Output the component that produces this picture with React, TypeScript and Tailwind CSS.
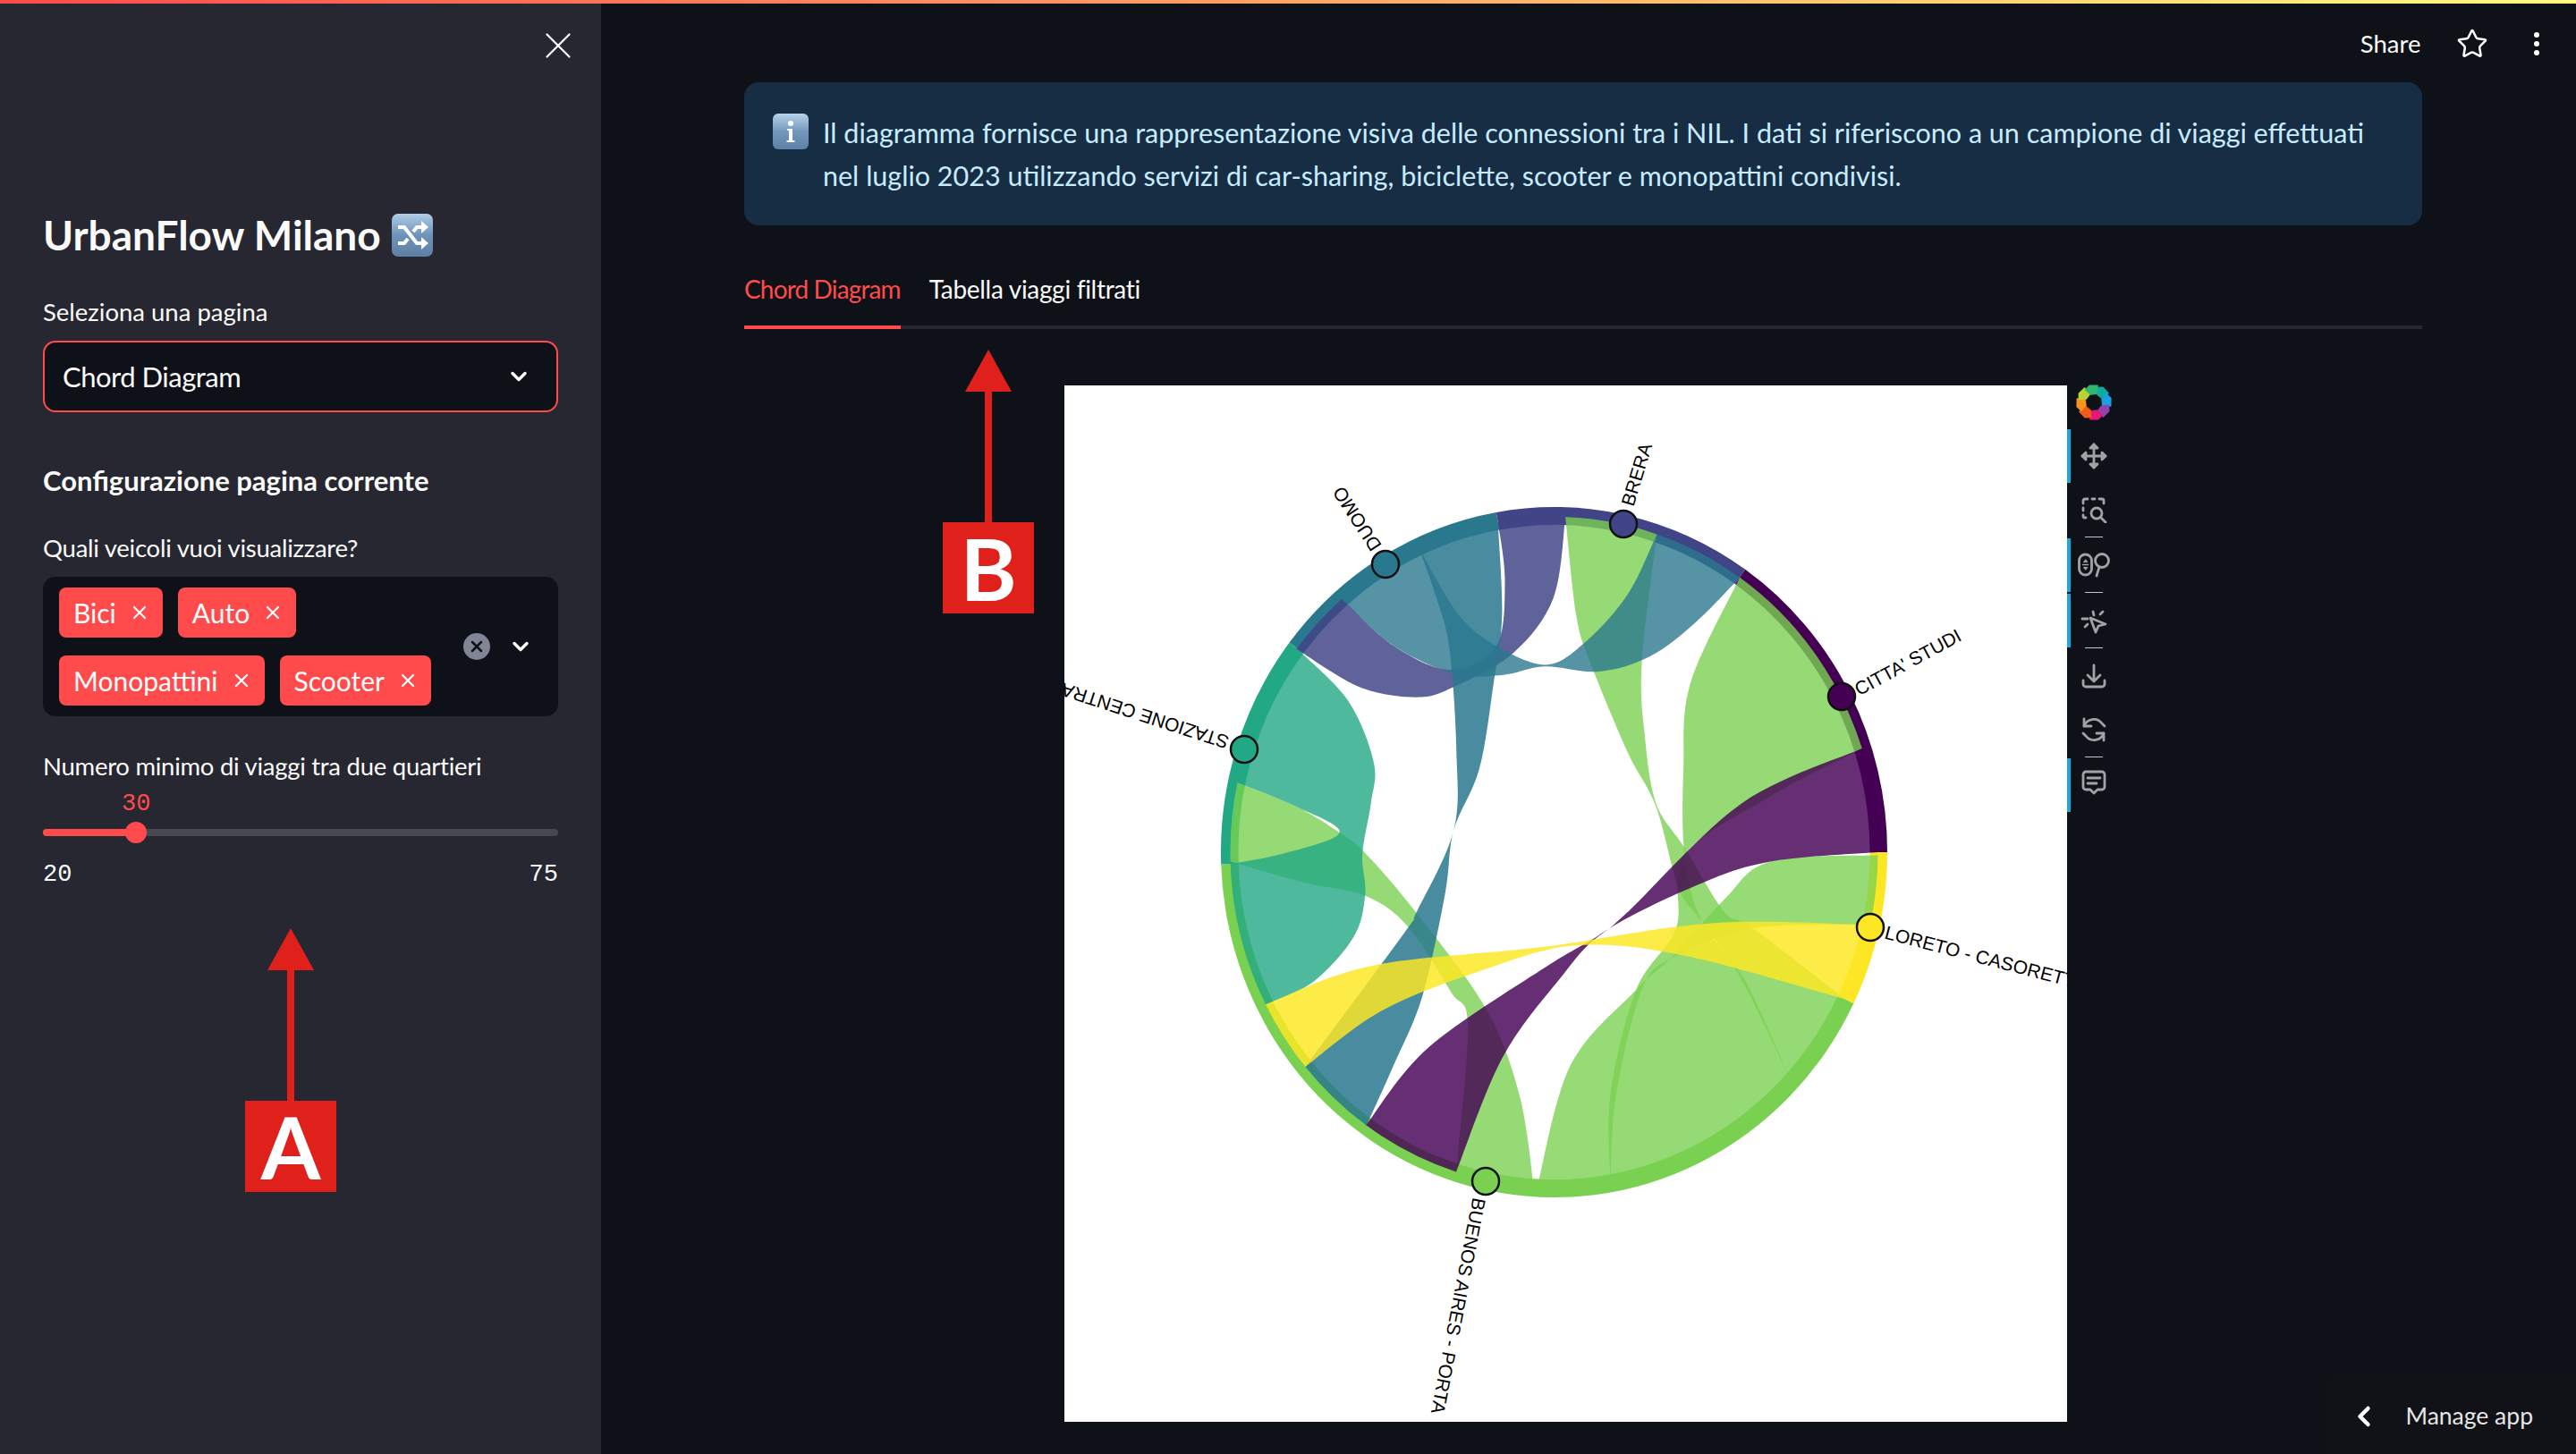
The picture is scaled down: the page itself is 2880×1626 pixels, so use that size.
import React from "react";
import { ChevronDown, ChevronLeft, Star, X } from "lucide-react";

// chord geometry was read off the zoomed crops, so points are in crop units (u, v)
const CX = 1737.5;
const CY = 953;
const toXY = ([u, v]: number[]) => [1150 + u / 1.568, 420 + v / 2.613];
const onRing = (deg: number, rx = 362, ry = 375) => {
  const t = (deg * Math.PI) / 180;
  return [CX + rx * Math.cos(t), CY + ry * Math.sin(t)];
};
const f = (n: number) => n.toFixed(1);

function spline(pts: number[][]) {
  let d = "";
  for (let i = 0; i < pts.length - 1; i++) {
    const p0 = pts[Math.max(i - 1, 0)];
    const p1 = pts[i];
    const p2 = pts[i + 1];
    const p3 = pts[Math.min(i + 2, pts.length - 1)];
    d += ` C${f(p1[0] + (p2[0] - p0[0]) / 6)} ${f(p1[1] + (p2[1] - p0[1]) / 6)} ${f(p2[0] - (p3[0] - p1[0]) / 6)} ${f(p2[1] - (p3[1] - p1[1]) / 6)} ${f(p2[0])} ${f(p2[1])}`;
  }
  return d;
}

type Chord = { color: string; op?: number; a: number[]; b: number[]; s1: number[][]; s2: number[][] };

function chordPath({ a, b, s1, s2 }: Chord) {
  const a1 = onRing(a[0]);
  const a2 = onRing(a[1]);
  const b1 = onRing(b[0]);
  const b2 = onRing(b[1]);
  const side1 = [a1, ...s1.map(toXY), b1];
  const side2 = [b2, ...s2.map(toXY).reverse(), a2];
  return (
    `M${f(a1[0])} ${f(a1[1])}` +
    spline(side1) +
    ` A362 375 0 0 ${b[1] > b[0] ? 1 : 0} ${f(b2[0])} ${f(b2[1])}` +
    spline(side2) +
    ` A362 375 0 0 ${a[0] > a[1] ? 1 : 0} ${f(a1[0])} ${f(a1[1])}Z`
  );
}

const GREEN = "#7ad151";
const TEAL = "#2a788e";
const INDIGO = "#414487";
const SEA = "#22a884";
const PURPLE = "#440154";
const YELLOW = "#fde725";

const chords: Chord[] = [
  // Citta - Buenos Aires
  { color: GREEN, op: 0.8, a: [305, 342], b: [43, 80], s1: [[1160, 900], [1148, 1150], [1150, 1400], [1180, 1595], [1255, 1765]], s2: [[1300, 1230], [1150, 1400], [1135, 1615], [1065, 1795], [1020, 2100]] },
  // Loreto - Buenos Aires
  { color: GREEN, op: 0.78, a: [0.5, 12.5], b: [93, 80], s1: [[1300, 1420], [1220, 1530], [1130, 1695], [1065, 1795], [950, 2015]], s2: [[1270, 1615], [1130, 1700], [1075, 1795], [1030, 2100]] },
  // Brera - Buenos Aires
  { color: GREEN, op: 0.8, a: [272, 288.5], b: [43, 26], s1: [[960, 700], [985, 840], [1050, 1100], [1100, 1260], [1140, 1500], [1180, 1595], [1250, 1765]], s2: [[1075, 840], [1080, 1050], [1100, 1250], [1150, 1380], [1220, 1568], [1270, 1615]] },
  // Stazione - Buenos Aires (green)
  { color: GREEN, op: 0.8, a: [192, 178.4], b: [93.6, 107.6], s1: [[470, 1260], [545, 1335], [590, 1395], [675, 1560], [800, 1845], [860, 2100]], s2: [[480, 1480], [590, 1520], [665, 1610], [740, 1800], [770, 1900]] },
  // Stazione - Buenos Aires (sea green)
  { color: SEA, op: 0.8, a: [217.4, 192], b: [153, 178], s1: [[560, 950], [605, 1130], [600, 1250], [585, 1400], [590, 1515], [570, 1640], [500, 1770]], s2: [[470, 1260], [545, 1335], [450, 1395]] },
  // Duomo - Brera
  { color: INDIGO, op: 0.84, a: [217.3, 229.1], b: [272, 260], s1: [[580, 910], [680, 940], [745, 910], [850, 810], [920, 650]], s2: [[640, 790], [740, 860], [820, 790], [835, 600]] },
  { color: TEAL, op: 0.8, a: [229, 245.3], b: [305, 288.5], s1: [[640, 790], [745, 870], [830, 875], [905, 850], [1000, 865], [1090, 820], [1170, 720]], s2: [[750, 690], [810, 780], [905, 845], [975, 780], [1050, 640]] },
  // Duomo - Buenos Aires
  { color: TEAL, op: 0.85, a: [245.3, 260], b: [140.2, 125.4], s1: [[715, 650], [738, 800], [750, 1100], [745, 1330], [680, 1568], [660, 1625]], s2: [[830, 700], [815, 900], [790, 1150], [745, 1330], [730, 1515], [690, 1815], [640, 2015]] },
  // Citta - Buenos Aires (purple)
  { color: PURPLE, op: 0.82, a: [342, 360], b: [125.5, 107.6], s1: [[1250, 1250], [1050, 1568], [1000, 1635], [900, 1735], [700, 1965]], s2: [[1300, 1420], [1170, 1490], [1010, 1625], [930, 1765], [830, 1995]] },
  // Loreto - Buenos Aires (yellow)
  { color: YELLOW, op: 0.84, a: [153, 140.2], b: [12.5, 26], s1: [[600, 1725], [900, 1670], [1200, 1600]], s2: [[620, 1855], [800, 1735], [960, 1665], [1150, 1695]] },
];

const segments = [
  { from: 217.4, to: 260, color: TEAL },
  { from: 260, to: 305, color: INDIGO },
  { from: 305, to: 360, color: PURPLE },
  { from: 0, to: 26, color: YELLOW },
  { from: 26, to: 178, color: GREEN },
  { from: 178, to: 217.4, color: SEA },
];

function segmentPath(from: number, to: number) {
  const o1 = onRing(from, 372.5, 386);
  const o2 = onRing(to, 372.5, 386);
  const i1 = onRing(from, 353, 366);
  const i2 = onRing(to, 353, 366);
  return `M${f(o1[0])} ${f(o1[1])} A372.5 386 0 0 1 ${f(o2[0])} ${f(o2[1])} L${f(i2[0])} ${f(i2[1])} A353 366 0 0 0 ${f(i1[0])} ${f(i1[1])}Z`;
}

const dots = [
  { x: 1815, y: 586, color: INDIGO },
  { x: 1549, y: 631, color: TEAL },
  { x: 1391, y: 838, color: SEA },
  { x: 2059, y: 779, color: PURPLE },
  { x: 2091, y: 1037, color: YELLOW },
  { x: 1661, y: 1321, color: GREEN },
];

const labels = [
  { text: "BRERA", x: 1819, y: 565, rot: -73 },
  { text: "DUOMO", x: 1539, y: 614, rot: -123 },
  { text: "STAZIONE CENTRALE", x: 1373, y: 831, rot: 198 },
  { text: "CITTA' STUDI", x: 2075, y: 772, rot: -28.6 },
  { text: "LORETO - CASORETTO", x: 2108, y: 1042, rot: 14.6 },
  { text: "BUENOS AIRES - PORTA", x: 1654, y: 1340, rot: 101 },
];

function ChordChart() {
  return (
    <svg viewBox="1190 431 1121 1159" className="block h-[1159px] w-[1121px] shrink-0 bg-white">
      {segments.map((s) => (
        <path key={s.from} d={segmentPath(s.from, s.to)} fill={s.color} />
      ))}
      {chords.map((c, i) => (
        <path key={i} d={chordPath(c)} fill={c.color} fillOpacity={c.op} />
      ))}
      {dots.map((d) => (
        <circle key={d.x} cx={d.x} cy={d.y} r="15" fill={d.color} stroke="#111" strokeWidth="2.5" />
      ))}
      {labels.map((l) => (
        <text
          key={l.text}
          x={l.x}
          y={l.y}
          fontFamily="Liberation Sans, sans-serif"
          fontSize="21"
          dominantBaseline="central"
          fill="#000"
          transform={`rotate(${l.rot} ${l.x} ${l.y})`}
        >
          {l.text}
        </text>
      ))}
    </svg>
  );
}

function BokehLogo() {
  const petals = ["#0fa9a0", "#18a0e0", "#8e44ad", "#e5177b", "#f05a1a", "#f7941d", "#b5d334", "#2bb673"];
  return (
    <svg viewBox="0 0 40 40" className="h-10 w-10">
      {petals.map((c, i) => (
        <path key={c} d="M20 11 L16 3 L23 0 L32 4 L27 13Z" fill={c} transform={`rotate(${i * 45 + 22} 20 20)`} />
      ))}
    </svg>
  );
}

const toolIcon = {
  fill: "none",
  stroke: "#a0a3a6",
  strokeWidth: 2.8,
  strokeLinecap: "round" as const,
  strokeLinejoin: "round" as const,
  className: "h-[30px] w-[30px]",
};

function ToolItem({ active, children }: { active?: boolean; children: React.ReactNode }) {
  return (
    <div className="relative flex h-[60px] w-[60px] items-center justify-center">
      {active && <div className="absolute bottom-0 left-0 top-0 w-1 bg-[#1aa7dd]" />}
      {children}
    </div>
  );
}

function ToolSep() {
  return (
    <div className="h-0.5">
      <div className="ml-[20px] h-px w-5 bg-[#c4c6c8]" />
    </div>
  );
}

function Toolbar() {
  return (
    <div className="flex w-[60px] shrink-0 flex-col">
      <div className="flex h-[49px] items-center justify-center pb-[11px]">
        <BokehLogo />
      </div>
      <ToolItem active>
        <svg viewBox="0 0 30 30" {...toolIcon}>
          <path d="M15 2v26M2 15h26" />
          <path d="M15 2l-4 4h8zM15 28l-4-4h8zM2 15l4-4v8zM28 15l-4-4v8z" fill="#a0a3a6" />
        </svg>
      </ToolItem>
      <ToolItem>
        <svg viewBox="0 0 30 30" {...toolIcon}>
          <path d="M3 8V5a2 2 0 0 1 2-2h3M13 3h3M21 3h3a2 2 0 0 1 2 2v3M3 13v3M3 21v1a2 2 0 0 0 2 2h1" />
          <circle cx="18" cy="19" r="6" />
          <path d="M22.5 23.5L28 29" />
        </svg>
      </ToolItem>
      <ToolSep />
      <ToolItem active>
        <svg viewBox="0 0 36 30" {...toolIcon} className="h-[30px] w-[36px]">
          <rect x="1.5" y="3" width="14" height="23" rx="7" />
          <path d="M5.5 14.5h6" strokeWidth="1.5" />
          <path d="M8.5 9l-2 2.5h4zM8.5 20l-2-2.500h4z" fill="#a0a3a6" strokeWidth="1" />
          <circle cx="27" cy="10" r="7.5" />
          <path d="M24 17l-3 10" />
        </svg>
      </ToolItem>
      <ToolSep />
      <ToolItem active>
        <svg viewBox="0 0 30 30" {...toolIcon}>
          <path d="M14 5l1 4M25 5l-3 3M2 13h6M5 22l3-3" />
          <path d="M11 12l17 7-8 2-3 7z" />
        </svg>
      </ToolItem>
      <ToolSep />
      <ToolItem>
        <svg viewBox="0 0 30 30" {...toolIcon}>
          <path d="M15 3v18M8 14l7 7 7-7" />
          <path d="M3 20v4a3 3 0 0 0 3 3h18a3 3 0 0 0 3-3v-4" />
        </svg>
      </ToolItem>
      <ToolItem>
        <svg viewBox="0 0 30 30" {...toolIcon}>
          <path d="M4 11a11.5 11.5 0 0 1 20-3l3 3M26 19a11.5 11.5 0 0 1-20 3l-3-3" />
          <path d="M4 3v8h8M26 27v-8h-8" />
        </svg>
      </ToolItem>
      <ToolSep />
      <ToolItem active>
        <svg viewBox="0 0 30 30" {...toolIcon} className="-mt-1.5 h-[30px] w-[30px]">
          <path d="M6 3h18a3 3 0 0 1 3 3v14a3 3 0 0 1-3 3h-5l-4 4-4-4H6a3 3 0 0 1-3-3V6a3 3 0 0 1 3-3z" />
          <path d="M8 10h14M8 16h10" />
        </svg>
      </ToolItem>
    </div>
  );
}

function ShuffleEmoji() {
  return (
    <svg viewBox="0 0 46 48" className="ml-3 h-12 w-[46px]">
      <defs>
        <linearGradient id="shuffle-bg" x1="0" y1="0" x2="0" y2="1">
          <stop offset="0" stopColor="#aecde8" />
          <stop offset="0.5" stopColor="#6f93b8" />
          <stop offset="1" stopColor="#5d7fa4" />
        </linearGradient>
      </defs>
      <rect width="46" height="48" rx="7" fill="url(#shuffle-bg)" />
      <path d="M7 15h7l14 18h6M7 33h7l4-5M24 20l4-5h6" fill="none" stroke="#fff" strokeWidth="4" />
      <path d="M33 8l8 7-8 7zM33 26l8 7-8 7z" fill="#fff" />
    </svg>
  );
}

function InfoEmoji() {
  return (
    <svg viewBox="0 0 40 40" className="h-10 w-10 shrink-0">
      <defs>
        <linearGradient id="info-bg" x1="0" y1="0" x2="0" y2="1">
          <stop offset="0" stopColor="#b8d3ea" />
          <stop offset="0.5" stopColor="#7397bb" />
          <stop offset="1" stopColor="#5f81a6" />
        </linearGradient>
      </defs>
      <rect width="40" height="40" rx="6" fill="url(#info-bg)" />
      <circle cx="20" cy="11" r="3" fill="#fff" />
      <path d="M16 17h6v13h2.5v2h-9v-2H18V19h-2z" fill="#fff" />
    </svg>
  );
}

function Tag({ label }: { label: string }) {
  return (
    <div className="flex h-14 items-center gap-[14px] rounded-lg bg-[#ff4b4b] pl-4 pr-[14px] text-[30px] text-white">
      <span>{label}</span>
      <X className="h-[24px] w-[24px]" strokeWidth={2.2} />
    </div>
  );
}

function Arrow({ letter }: { letter: string }) {
  return (
    <div className="flex w-[102px] flex-col items-center">
      <div className="h-0 w-0 border-x-[26px] border-b-[47px] border-x-transparent border-b-[#e0201b]" />
      <div className="h-[146px] w-2 bg-[#e0201b]" />
      <div className="flex h-[102px] w-[102px] items-center justify-center bg-[#e0201b] text-[96px] font-bold leading-none text-white">
        {letter}
      </div>
    </div>
  );
}

export default function App() {
  return (
    <div className="relative flex h-[1626px] w-[2880px] overflow-hidden bg-[#0e1117] font-[Lato,sans-serif] text-[#fafafa]">
      <div className="absolute inset-x-0 top-0 z-10 h-1 bg-[linear-gradient(90deg,#ff4b4b,#fffd80)]" />

      {/* sidebar */}
      <aside className="relative flex w-[672px] shrink-0 flex-col bg-[#262730] px-12 pt-[232px]">
        <X className="absolute left-[599px] top-[26px] h-[50px] w-[50px]" strokeWidth={1.1} />

        <div className="flex h-[62px] items-center text-[46px] font-bold leading-none">
          UrbanFlow Milano
          <ShuffleEmoji />
        </div>

        <div className="mt-[35px] flex h-10 items-center text-[27.5px]">Seleziona una pagina</div>
        <div className="mt-[12px] flex h-20 items-center justify-between rounded-[14px] border-2 border-[#ff4b4b] bg-[#0e1117] pl-5 pr-[28px] text-[31px] tracking-[-0.5px]">
          <span>Chord Diagram</span>
          <ChevronDown className="h-7 w-7" strokeWidth={3} />
        </div>

        <div className="mt-[56px] flex h-[40px] items-center text-[31px] font-bold">Configurazione pagina corrente</div>
        <div className="mt-[36px] flex h-10 items-center text-[27.5px] tracking-[-0.25px]">Quali veicoli vuoi visualizzare?</div>
        <div className="mt-[12px] flex h-[156px] items-center justify-between rounded-[14px] bg-[#0e1117] pl-[18px] pr-[28px]">
          <div className="flex w-[440px] flex-wrap gap-x-[17px] gap-y-5">
            <Tag label="Bici" />
            <Tag label="Auto" />
            <Tag label="Monopattini" />
            <Tag label="Scooter" />
          </div>
          <div className="flex items-center gap-[20px]">
            <div className="flex h-[30px] w-[30px] items-center justify-center rounded-full bg-[#808495]">
              <X className="h-5 w-5 text-[#0e1117]" strokeWidth={3} />
            </div>
            <ChevronDown className="h-7 w-7" strokeWidth={3} />
          </div>
        </div>

        <div className="mt-[36px] flex h-10 items-center text-[27.5px] tracking-[-0.27px]">Numero minimo di viaggi tra due quartieri</div>
        <div className="relative mt-[2px] h-[48px] font-['Liberation_Mono',monospace] text-[27px]">
          <span className="absolute left-[88px] top-0 leading-[40px] text-[#ff4b4b]">30</span>
        </div>
        <div className="relative h-2 rounded-full bg-[#464852]">
          <div className="h-2 w-[104px] rounded-l-full bg-[#ff4b4b]" />
          <div className="absolute left-[92px] top-[-8px] h-6 w-6 rounded-full bg-[#ff4b4b]" />
        </div>
        <div className="mt-[23px] flex justify-between font-['Liberation_Mono',monospace] text-[27px] leading-[40px]">
          <span>20</span>
          <span>75</span>
        </div>

        <div className="ml-[226px] mt-[40px]">
          <Arrow letter="A" />
        </div>
      </aside>

      {/* main */}
      <main className="relative flex min-w-0 flex-1 flex-col pl-[160px] pr-[172px] pt-[92px]">
        <div className="absolute right-[41px] top-[31px] flex items-center text-[27.5px] leading-[30px]">
          <span>Share</span>
          <Star className="ml-[39px] h-9 w-9" strokeWidth={1.7} />
          <div className="ml-[51px] flex flex-col gap-[3.5px]">
            <span className="h-[6.5px] w-[6.5px] rounded-full bg-white" />
            <span className="h-[6.5px] w-[6.5px] rounded-full bg-white" />
            <span className="h-[6.5px] w-[6.5px] rounded-full bg-white" />
          </div>
        </div>

        <div className="flex h-40 gap-4 rounded-2xl bg-[#172d43] px-8 pt-8 text-[30.5px] leading-[48px] text-[#c7ebff]">
          <div className="pt-[3px]">
            <InfoEmoji />
          </div>
          <div>
            <div>Il diagramma fornisce una rappresentazione visiva delle connessioni tra i NIL. I dati si riferiscono a un campione di viaggi effettuati</div>
            <div>nel luglio 2023 utilizzando servizi di car-sharing, biciclette, scooter e monopattini condivisi.</div>
          </div>
        </div>

        <div className="mt-[48px] flex gap-8 border-b-4 border-[#262730] text-[28px]">
          <div className="-mb-1 flex h-[68px] items-start border-b-4 border-[#ff4b4b] pt-[2px] tracking-[-0.85px] text-[#ff4b4b]">Chord Diagram</div>
          <div className="flex h-[64px] items-start pt-[2px] tracking-[-0.3px]">Tabella viaggi filtrati</div>
        </div>

        <div className="mt-[63px] flex pl-[358px]">
          <ChordChart />
          <Toolbar />
        </div>

        <div className="absolute left-[382px] top-[391px]">
          <Arrow letter="B" />
        </div>

        <div className="absolute bottom-0 right-0 flex h-[84px] items-center bg-[#111217] pl-[24px] pr-[48px] text-[26.5px] text-[#e6e6e6]">
          <ChevronLeft className="h-9 w-9 text-white" strokeWidth={3} />
          <span className="ml-[28px]">Manage app</span>
        </div>
      </main>
    </div>
  );
}
